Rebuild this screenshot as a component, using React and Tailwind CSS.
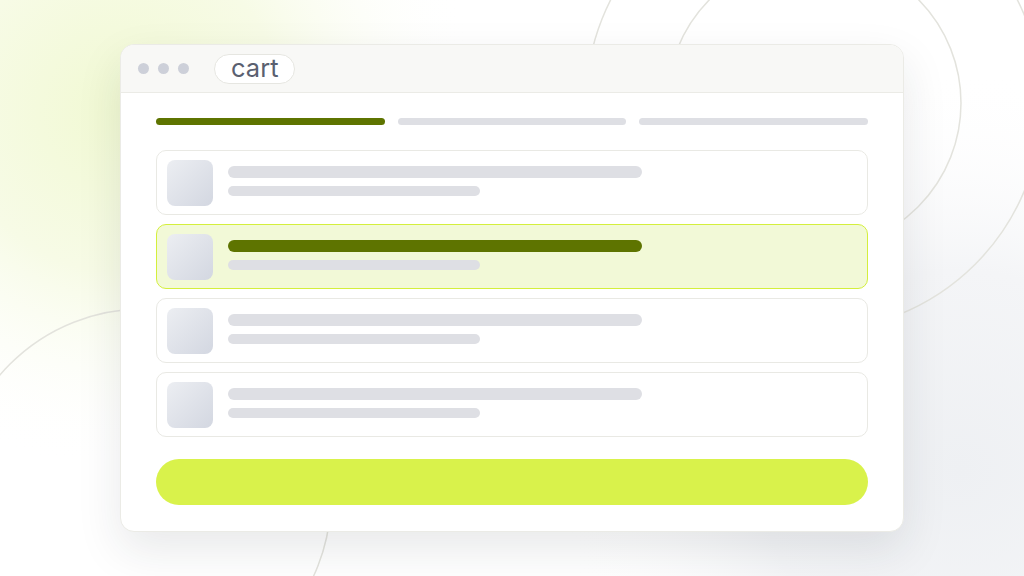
import React from "react";

function Item({ active }) {
  return (
    <div
      className={
        "flex h-[65px] items-start gap-[15px] rounded-[10px] border-[1.5px] px-[10px] pt-[9px] " +
        (active ? "border-[#d4ef3c] bg-[#f2f9d7]" : "border-[#e9e9e4] bg-white")
      }
    >
      <div className="h-[46px] w-[46px] shrink-0 rounded-[8px] bg-gradient-to-br from-[#eceef2] to-[#d3d7e1]" />
      <div className="flex flex-col gap-[8px] pt-[6px]">
        <div className={"h-[12px] w-[414px] rounded-full " + (active ? "bg-[#5e7400]" : "bg-[#dedfe4]")} />
        <div className="h-[10px] w-[252px] rounded-full bg-[#dedfe4]" />
      </div>
    </div>
  );
}

export default function App() {
  return (
    <div className="relative flex h-[576px] w-[1024px] items-center justify-center overflow-hidden bg-white font-['Inter','Liberation_Sans',sans-serif]">
      <svg className="absolute inset-0" width="1024" height="576" viewBox="0 0 1024 576">
        <defs>
          <radialGradient id="lime" cx="120" cy="110" r="360" gradientUnits="userSpaceOnUse">
            <stop offset="0" stopColor="#f1f9d3" />
            <stop offset="0.45" stopColor="#f7fbe6" />
            <stop offset="1" stopColor="#ffffff" stopOpacity="0" />
          </radialGradient>
          <radialGradient id="gray" cx="960" cy="470" r="400" gradientUnits="userSpaceOnUse">
            <stop offset="0" stopColor="#eef0f3" />
            <stop offset="0.5" stopColor="#f4f5f7" />
            <stop offset="1" stopColor="#ffffff" stopOpacity="0" />
          </radialGradient>
        </defs>
        <rect width="1024" height="576" fill="#ffffff" />
        <rect width="1024" height="576" fill="url(#gray)" />
        <rect width="1024" height="576" fill="url(#lime)" />
        <circle cx="814" cy="103" r="147" fill="none" stroke="#e3e3dd" strokeWidth="1.5" />
        <circle cx="814" cy="103" r="228" fill="none" stroke="#e3e3dd" strokeWidth="1.5" />
        <circle cx="143" cy="497" r="188" fill="none" stroke="#e3e3dd" strokeWidth="1.5" />
      </svg>

      <div className="relative flex h-[488px] w-[784px] flex-col overflow-hidden rounded-[14px] border border-[#ebebe6] bg-white shadow-[0_18px_45px_rgba(30,35,50,0.10)]">
        <div className="flex h-[48px] shrink-0 items-center border-b-[1.5px] border-[#ebebe6] bg-[#f8f8f6] pl-[17px]">
          <div className="flex gap-[9px]">
            <span className="h-[11px] w-[11px] rounded-full bg-[#cdd0d9]" />
            <span className="h-[11px] w-[11px] rounded-full bg-[#cdd0d9]" />
            <span className="h-[11px] w-[11px] rounded-full bg-[#cdd0d9]" />
          </div>
          <div className="ml-[25px] flex h-[30px] items-center rounded-full border-[1.5px] border-[#e6e6e1] bg-white px-[16px] pb-[2px] text-[25.5px] leading-none text-[#5a6070]">
            cart
          </div>
        </div>

        <div className="flex flex-col px-[35px] pt-[25px]">
          <div className="flex gap-[13px]">
            <div className="h-[7px] flex-1 rounded-full bg-[#5e7400]" />
            <div className="h-[7px] flex-1 rounded-full bg-[#dedfe4]" />
            <div className="h-[7px] flex-1 rounded-full bg-[#dedfe4]" />
          </div>

          <div className="mt-[25px] flex flex-col gap-[9px]">
            <Item />
            <Item active />
            <Item />
            <Item />
          </div>

          <div className="mt-[22px] h-[46px] rounded-full bg-[#d9f24b]" />
        </div>
      </div>
    </div>
  );
}
